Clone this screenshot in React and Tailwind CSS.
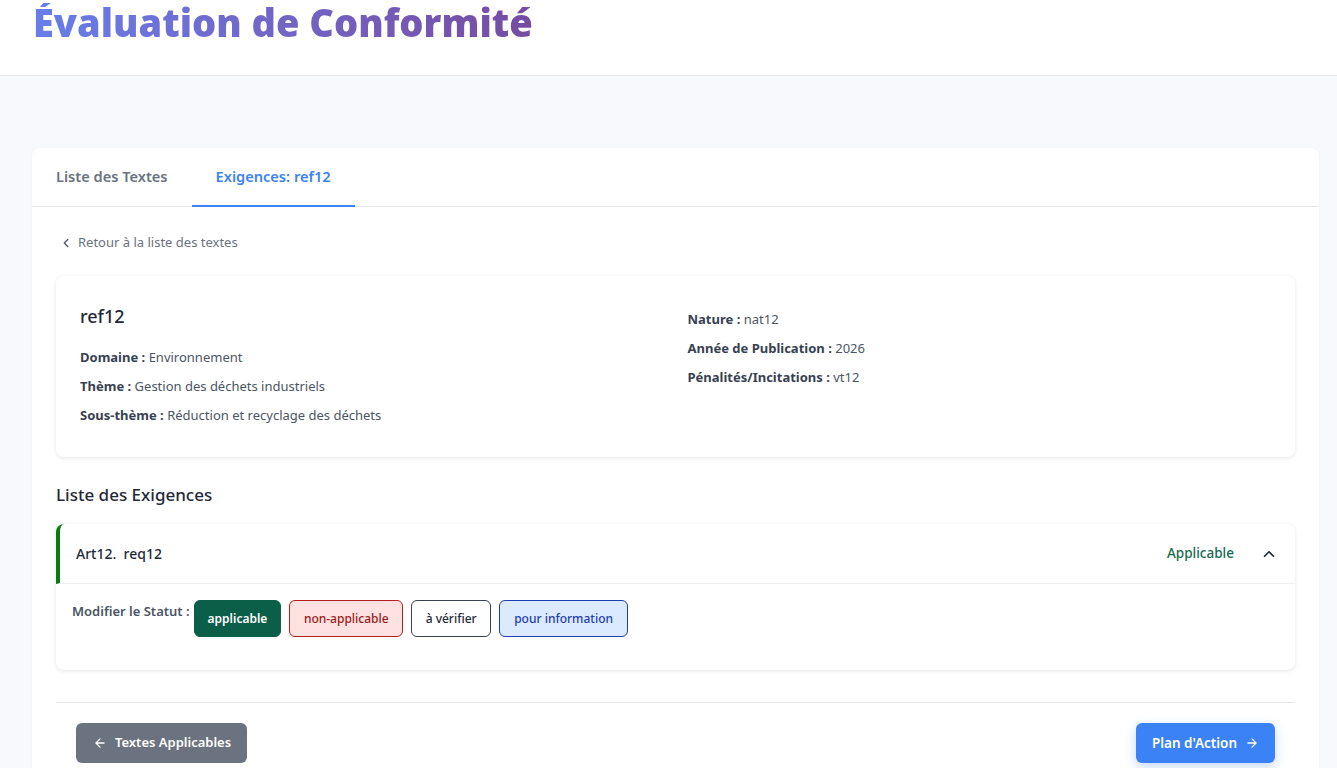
import React from "react";

const font = { fontFamily: '"Noto Sans", "Open Sans", Arial, sans-serif' };

function Row({ label, value }) {
  return (
    <p className="my-2 text-[13px] leading-[21px] text-[#4b5563]">
      <span className="font-bold text-[#374151]">{label} :</span> {value}
    </p>
  );
}

export default function App() {
  return (
    <div className="min-h-[768px] bg-[#f8f9fc]" style={font}>
      <header className="h-[76px] border-b border-[#e5e7eb] bg-white pl-[33px] pt-[3px]">
        <h1 className="inline-block bg-gradient-to-r from-[#667eea] to-[#764ba2] bg-clip-text pb-1 text-[38px] font-black leading-none text-transparent">
          Évaluation de Conformité
        </h1>
      </header>

      <main className="pl-8 pr-[18px] pt-[72px]">
        <div className="rounded-lg bg-white shadow-[0_1px_3px_rgba(0,0,0,0.05)]">
          <div className="flex h-[59px] border-b border-[#e5e7eb]">
            <button className="px-6 text-[14.6px] font-semibold text-[#6b7280]">Liste des Textes</button>
            <button className="-mb-px border-b-2 border-[#3b82f6] px-6 text-[14.6px] font-semibold text-[#3b82f6]">
              Exigences: ref12
            </button>
          </div>

          <div className="px-6 pt-[24px]">
            <div className="flex h-[22px] items-center gap-[5px] pl-[3px] pt-[2px] text-[13px] text-[#6b7280]">
              <svg width="14" height="14" viewBox="0 0 24 24" fill="none" stroke="#4b5563" strokeWidth="2.2" strokeLinecap="round" strokeLinejoin="round">
                <path d="M15 18l-6-6 6-6" />
              </svg>
              <span>Retour à la liste des textes</span>
            </div>

            <div className="mt-[23px] grid grid-cols-2 gap-6 rounded-lg bg-white px-6 pt-[25px] pb-[23px] shadow-[0_1px_4px_rgba(0,0,0,0.1)]">
              <div>
                <h3 className="mb-4 text-[18px] font-medium leading-[30px] text-[#1f2937]">ref12</h3>
                <Row label="Domaine" value="Environnement" />
                <Row label="Thème" value="Gestion des déchets industriels" />
                <Row label="Sous-thème" value="Réduction et recyclage des déchets" />
              </div>
              <div>
                <Row label="Nature" value="nat12" />
                <Row label="Année de Publication" value="2026" />
                <Row label="Pénalités/Incitations" value="vt12" />
              </div>
            </div>

            <h2 className="mt-6 mb-[15px] text-[17px] font-medium leading-[28px] text-[#1f2937]">Liste des Exigences</h2>

            <div className="rounded-lg bg-white shadow-[0_1px_4px_rgba(0,0,0,0.1)]">
              <div className="flex h-[60px] items-center rounded-tl-lg border-b border-[#eef0f3] border-l-4 border-l-[#0a7a12] pl-4 pr-[17px]">
                <span className="flex-1 text-[14px] font-medium text-[#1f2937]">Art12.&nbsp; req12</span>
                <span className="text-[13.5px] font-medium text-[#166a4f]">Applicable</span>
                <svg className="ml-[26px]" width="18" height="18" viewBox="0 0 24 24" fill="none" stroke="#1f2937" strokeWidth="2.2" strokeLinecap="round" strokeLinejoin="round">
                  <path d="M6 15l6-6 6 6" />
                </svg>
              </div>
              <div className="flex items-start px-4 pt-4 pb-[33px]">
                <span className="mr-[4px] pt-[1px] text-[13px] font-semibold leading-5 text-[#4b5563]">Modifier le Statut :</span>
                <div className="flex gap-2">
                  <button className="h-[37px] rounded-md border border-[#0b5e48] bg-[#0b5e48] px-[13px] text-[12px] font-semibold text-white">applicable</button>
                  <button className="h-[37px] rounded-md border border-[#b91c1c] bg-[#fee2e2] px-[13.5px] text-[12px] font-medium text-[#991b1b]">non-applicable</button>
                  <button className="h-[37px] rounded-md border border-[#374151] bg-white px-[13.5px] text-[12px] font-medium text-[#1f2937]">à vérifier</button>
                  <button className="h-[37px] rounded-md border border-[#1e40af] bg-[#dbeafe] px-[14px] text-[12px] font-medium text-[#1e40af]">pour information</button>
                </div>
              </div>
            </div>

            <div className="mt-8 border-t border-[#e5e7eb] px-5 pt-5 pb-6">
              <div className="flex items-center justify-between">
                <button className="flex h-10 items-center gap-2 rounded-md bg-[#6b7280] pl-[17px] pr-4 text-[13px] font-semibold text-white">
                  <svg width="14" height="14" viewBox="0 0 24 24" fill="none" stroke="white" strokeWidth="2.2" strokeLinecap="round" strokeLinejoin="round">
                    <path d="M19 12H5M12 19l-7-7 7-7" />
                  </svg>
                  Textes Applicables
                </button>
                <button className="flex h-10 items-center gap-2 rounded-md bg-[#3b82f6] px-4 text-[13.5px] font-semibold text-white shadow-[0_4px_12px_rgba(59,130,246,0.3)]">
                  Plan d'Action
                  <svg width="14" height="14" viewBox="0 0 24 24" fill="none" stroke="white" strokeWidth="2.2" strokeLinecap="round" strokeLinejoin="round">
                    <path d="M5 12h14M12 5l7 7-7 7" />
                  </svg>
                </button>
              </div>
            </div>
          </div>
        </div>
      </main>
    </div>
  );
}
